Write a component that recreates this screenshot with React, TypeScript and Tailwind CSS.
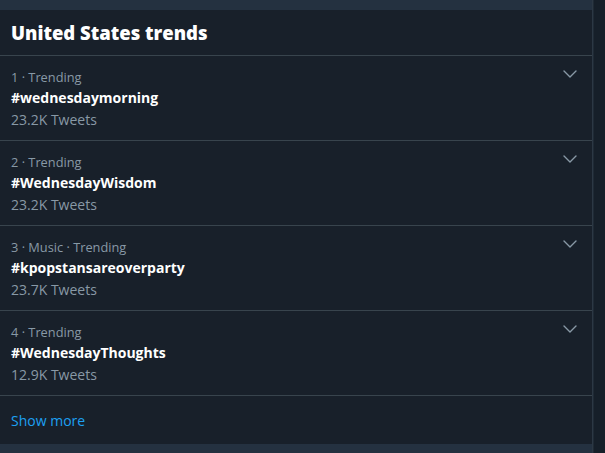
import { ChevronDown } from "lucide-react";

const Trends = [
  { meta: "1 · Trending", tag: "#wednesdaymorning", count: "23.2K Tweets" },
  { meta: "2 · Trending", tag: "#WednesdayWisdom", count: "23.2K Tweets" },
  { meta: "3 · Music · Trending", tag: "#kpopstansareoverparty", count: "23.7K Tweets" },
  { meta: "4 · Trending", tag: "#WednesdayThoughts", count: "12.9K Tweets" },
];

const App = () => {
  return (
    <div
      className="flex h-[453px] w-[605px] overflow-hidden bg-[#161f29]"
      style={{ fontFamily: '"Open Sans", "Noto Sans", sans-serif' }}
    >
      <div className="flex w-[593px] flex-col border-r border-[#2c3844]">
        <div className="h-[10px] shrink-0 bg-[#243140]" />
        <div className="flex flex-col bg-[#18202a]">
          <div className="flex h-[46px] items-center border-b border-[#38444d] px-[11px]">
            <h2 className="text-[18.5px] font-extrabold text-white">United States trends</h2>
          </div>
          {Trends.map((t) => (
            <div
              key={t.tag}
              className="flex h-[85px] border-b border-[#38444d] pl-[11px] pr-[10px]"
            >
              <div className="flex flex-1 flex-col pt-[12px]">
                <span className="text-[12.8px] leading-[18px] text-[#8899a6]">{t.meta}</span>
                <span className="mt-[2px] text-[14px] font-bold leading-[20px] text-white">
                  {t.tag}
                </span>
                <span className="mt-[2px] text-[14px] leading-[20px] text-[#8899a6]">
                  {t.count}
                </span>
              </div>
              <ChevronDown className="mt-[6px] h-[24px] w-[24px] text-[#8899a6]" strokeWidth={1.4} />
            </div>
          ))}
          <div className="flex h-[48px] items-center px-[11px]">
            <span className="text-[14px] text-[#1da1f2]">Show more</span>
          </div>
        </div>
        <div className="flex-1 bg-[#243140]" />
      </div>
      <div className="flex-1 border-l border-[#1f2a35]" />
    </div>
  );
};

export default App;
